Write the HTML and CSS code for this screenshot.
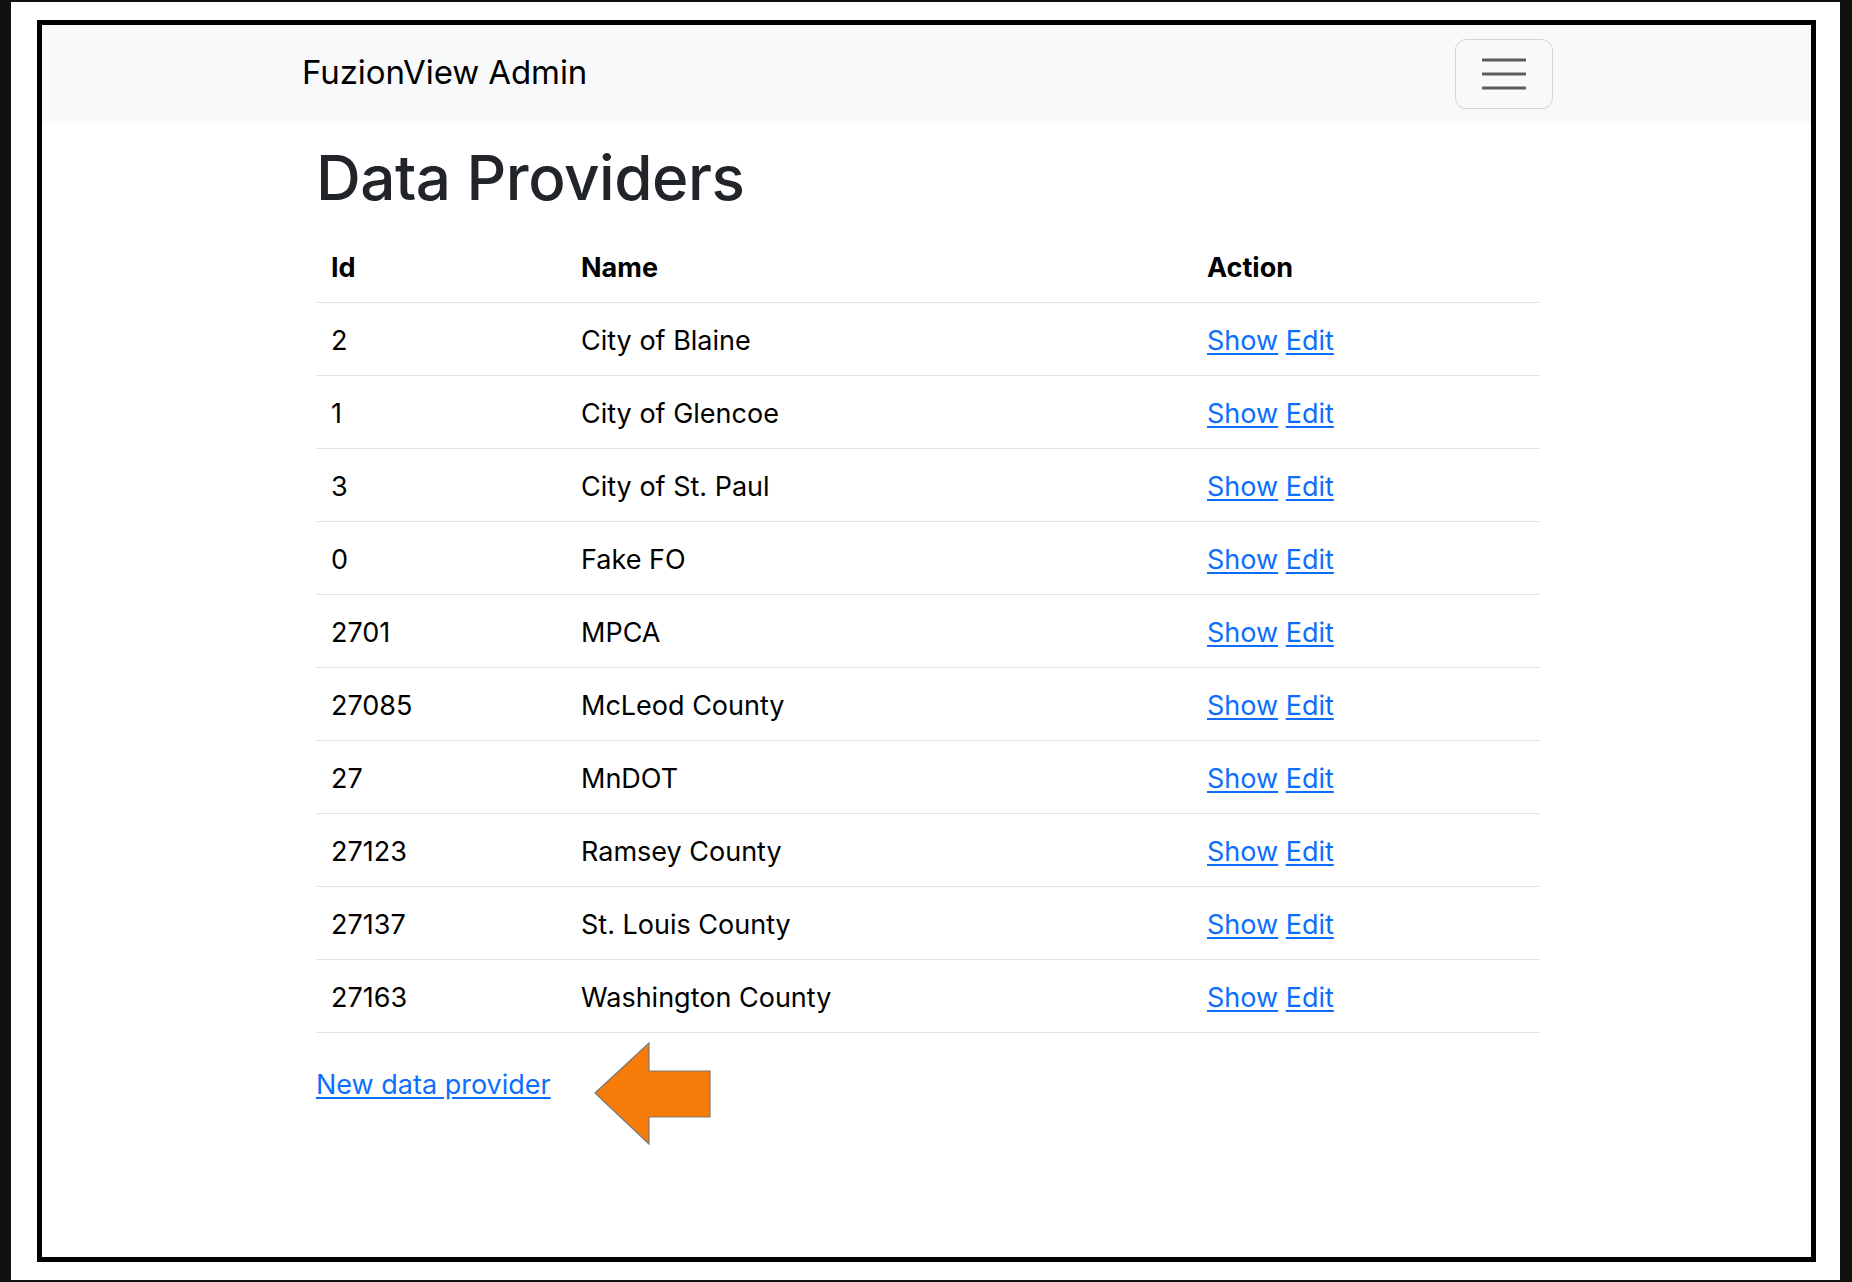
FILE: index.html
```html
<!DOCTYPE html>
<html lang="en">
<head>
<meta charset="utf-8">
<title>FuzionView Admin - Data Providers</title>
<link rel="stylesheet" href="styles.css">
</head>
<body>
<div class="outer">
  <div class="frame">
    <nav class="navbar">
      <span class="brand">FuzionView Admin</span>
      <button class="toggler" aria-label="Toggle navigation">
        <svg width="44" height="34" viewBox="0 0 44 34">
          <path d="M1 5H43M1 19H43M1 33H43" stroke="#5c5c5c" stroke-width="3" stroke-linecap="round" transform="translate(0,-2)"/>
        </svg>
      </button>
    </nav>
    <main class="container">
      <h1 class="title">Data Providers</h1>
      <table class="table">
        <thead>
          <tr><th class="c-id">Id</th><th class="c-name">Name</th><th class="c-act">Action</th></tr>
        </thead>
        <tbody>
          <tr><td>2</td><td>City of Blaine</td><td><a href="#">Show</a> <a href="#">Edit</a></td></tr>
          <tr><td>1</td><td>City of Glencoe</td><td><a href="#">Show</a> <a href="#">Edit</a></td></tr>
          <tr><td>3</td><td>City of St. Paul</td><td><a href="#">Show</a> <a href="#">Edit</a></td></tr>
          <tr><td>0</td><td>Fake FO</td><td><a href="#">Show</a> <a href="#">Edit</a></td></tr>
          <tr><td>2701</td><td>MPCA</td><td><a href="#">Show</a> <a href="#">Edit</a></td></tr>
          <tr><td>27085</td><td>McLeod County</td><td><a href="#">Show</a> <a href="#">Edit</a></td></tr>
          <tr><td>27</td><td>MnDOT</td><td><a href="#">Show</a> <a href="#">Edit</a></td></tr>
          <tr><td>27123</td><td>Ramsey County</td><td><a href="#">Show</a> <a href="#">Edit</a></td></tr>
          <tr><td>27137</td><td>St. Louis County</td><td><a href="#">Show</a> <a href="#">Edit</a></td></tr>
          <tr><td>27163</td><td>Washington County</td><td><a href="#">Show</a> <a href="#">Edit</a></td></tr>
        </tbody>
      </table>
      <div class="new-row">
        <a href="#" class="new-link">New data provider</a>
        <svg class="arrow" width="120" height="104" viewBox="0 0 120 104">
          <polygon points="2,51 56,1 56,29 117,29 117,75 56,75 56,102" fill="#f77b08" stroke="#7a7a7a" stroke-width="1.2"/>
        </svg>
      </div>
    </main>
  </div>
</div>
</body>
</html>
```

FILE: styles.css
```css
* { box-sizing: border-box; }
html, body { margin: 0; padding: 0; }
body {
  background: #ffffff;
  font-family: Inter, "Liberation Sans", sans-serif;
  color: #000;
}
.outer {
  width: 1852px;
  height: 1282px;
  border-style: solid;
  border-color: #111;
  border-width: 2px 12px 2px 11px;
  padding: 18px 24px 18px 26px;
  background: #fff;
}
.frame {
  height: 100%;
  border: 5px solid #000;
  background: #fff;
}
.navbar {
  height: 98px;
  background: #f8f9fa;
  display: flex;
  align-items: center;
  justify-content: space-between;
  padding: 0 258px 0 260px;
}
.brand {
  font-size: 33px;
  color: #000;
  letter-spacing: -0.1px;
  padding-bottom: 4px;
}
.toggler {
  width: 98px;
  height: 70px;
  border: 1px solid rgba(0,0,0,0.14);
  border-radius: 11px;
  background: transparent;
  display: flex;
  align-items: center;
  justify-content: center;
  padding: 0;
}
.container {
  width: 1224px;
  margin-left: 274px;
}
.title {
  margin: 0;
  padding-top: 18px;
  height: 107px;
  font-size: 62px;
  font-weight: 500;
  color: #212529;
  letter-spacing: -0.5px;
  line-height: 1.2;
}
.table {
  width: 1224px;
  border-collapse: collapse;
  table-layout: fixed;
  font-size: 27px;
}
.c-id { width: 250px; }
.c-name { width: 626px; }
.c-act { width: 348px; }
.table th, .table td {
  text-align: left;
  padding: 17px 15px 14px 15px;
  line-height: 41px;
  border-bottom: 1px solid #dee2e6;
  vertical-align: top;
}
.table th { font-weight: 700; color: #000; }
.table td { color: #000; font-weight: 400; }
.table a { color: #0d6efd; text-decoration: underline; text-underline-offset: 3px; }
.new-row {
  position: relative;
  padding-top: 31px;
  font-size: 27px;
  line-height: 41px;
}
.new-link { color: #0d6efd; text-decoration: underline; text-underline-offset: 3px; }
.arrow {
  position: absolute;
  left: 277px;
  top: 9px;
}
```
